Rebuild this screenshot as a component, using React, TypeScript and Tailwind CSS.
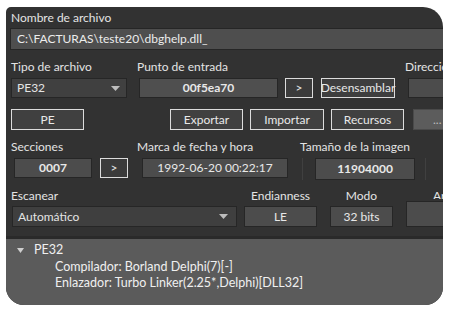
const field = "h-full border border-[#262626] bg-[#4c4c4c] flex items-center justify-center text-[#e8e8e8]"
const btn = "h-full border border-[#dcdcdc] bg-[#3b3b3b] flex items-center justify-center text-[#e8e8e8]"
const row = "flex whitespace-nowrap *:shrink-0"

function Arrow() {
  return (
    <svg width="9" height="5" viewBox="0 0 9 5" className="shrink-0">
      <path d="M0 0 L9 0 L4.5 5 Z" fill="#bdbdbd" />
    </svg>
  )
}

export default function App() {
  return (
    <div className="w-[450px] h-[312px] bg-white pt-[7px] pl-[6px]" style={{ fontFamily: 'Lato, "Noto Sans", sans-serif' }}>
      <div className="w-[437px] h-[298px] bg-[#323232] rounded-tl-[5px] rounded-tr-[20px] rounded-b-[18px] overflow-hidden text-[12px] text-[#e4e4e4] flex flex-col">
        <div className="mt-[3px] ml-[5px] h-[16px] leading-[16px]">Nombre de archivo</div>
        <div className="mt-[2px] ml-[4px] w-[440px] shrink-0 h-[22px] border border-[#262626] bg-[#4e4e4e] flex items-center pl-[6px] text-[#ececec]">
          C:\FACTURAS\teste20\dbghelp.dll_
        </div>

        <div className={row + " mt-[9px] h-[16px] leading-[16px]"}>
          <span className="ml-[5px] w-[126px]">Tipo de archivo</span>
          <span className="w-[268px]">Punto de entrada</span>
          <span>Dirección</span>
        </div>
        <div className={row + " mt-[3px] h-[20px]"}>
          <div className="ml-[5px] w-[116px] h-full border border-[#262626] bg-[#404040] flex items-center justify-between pl-[5px] pr-[6px]">
            <span>PE32</span>
            <Arrow />
          </div>
          <div className={field + " ml-[12px] w-[139px] font-bold bg-[#4f4f4f]"}>00f5ea70</div>
          <div className={btn + " ml-[7px] w-[28px]"}>&gt;</div>
          <div className={btn + " ml-[8px] w-[74px] bg-[#3e3e3e]"}>Desensamblar</div>
          <div className={field + " ml-[13px] w-[60px]"}></div>
        </div>

        <div className={row + " mt-[11px] h-[21px]"}>
          <div className={btn + " ml-[5px] w-[73px] bg-[#404040]"}>PE</div>
          <div className={btn + " ml-[86px] w-[73px] bg-[#404040]"}>Exportar</div>
          <div className={btn + " ml-[7px] w-[74px] bg-[#404040]"}>Importar</div>
          <div className={btn + " ml-[7px] w-[73px] bg-[#404040]"}>Recursos</div>
          <div className="ml-[9px] w-[60px] h-full border border-[#4a4a4a] bg-[#5c5c5c] flex items-center pl-[19px] text-[#bdbdbd]">...</div>
        </div>

        <div className={row + " mt-[9px] h-[16px] leading-[16px]"}>
          <span className="ml-[5px] w-[126px]">Secciones</span>
          <span className="w-[163px]">Marca de fecha y hora</span>
          <span>Tamaño de la imagen</span>
        </div>
        <div className={row + " mt-[3px] h-[20px]"}>
          <div className={field + " ml-[8px] w-[78px] font-bold"}>0007</div>
          <div className={btn + " ml-[8px] w-[28px]"}>&gt;</div>
          <div className={field + " ml-[14px] w-[146px]"}>1992-06-20 00:22:17</div>
          <div className="ml-[14px] w-[124px] h-[22px] border-x border-[#404040] flex items-start pl-[12px]">
            <div className={field + " w-[100px] h-[20px] font-bold"}>11904000</div>
          </div>
        </div>

        <div className={row + " mt-[10px]"}>
          <div className="ml-[6px] w-[225px] flex flex-col">
            <span className="h-[16px] leading-[16px] -ml-[1px]">Escanear</span>
            <div className="mt-[2px] h-[21px] border border-[#262626] bg-[#3f3f3f] flex items-center justify-between pl-[5px] pr-[8px]">
              <span>Automático</span>
              <Arrow />
            </div>
          </div>
          <div className="ml-[7px] w-[73px] flex flex-col">
            <span className="h-[16px] leading-[16px] text-center">Endianness</span>
            <div className={field + " mt-[2px] h-[21px]"}>LE</div>
          </div>
          <div className="ml-[13px] w-[63px] flex flex-col">
            <span className="h-[16px] leading-[16px] text-center">Modo</span>
            <div className={field + " mt-[2px] h-[21px]"}>32 bits</div>
          </div>
          <div className="ml-[13px] w-[60px] flex flex-col">
            <span className="h-[16px] leading-[16px] pl-[27px] overflow-hidden">Arquitectura</span>
            <div className={field + " mt-[2px] h-[21px]"}></div>
          </div>
        </div>

        <div className="mt-[9px] flex-1 bg-[#5b5b5b] border-t-[3px] border-[#2a2a2a] pt-[3px] text-[12.5px] text-[#f0f0f0] leading-[16px]">
          <div className="flex items-center h-[16px] ml-[11px]">
            <svg width="7" height="5" viewBox="0 0 7 5"><path d="M0 0 L7 0 L3.5 5 Z" fill="#cfcfcf" /></svg>
            <span className="ml-[10px]">PE32</span>
          </div>
          <div className="ml-[49px] mt-[1px]">Compilador: Borland Delphi(7)[-]</div>
          <div className="ml-[49px]">Enlazador: Turbo Linker(2.25*,Delphi)[DLL32]</div>
        </div>
      </div>
    </div>
  )
}
